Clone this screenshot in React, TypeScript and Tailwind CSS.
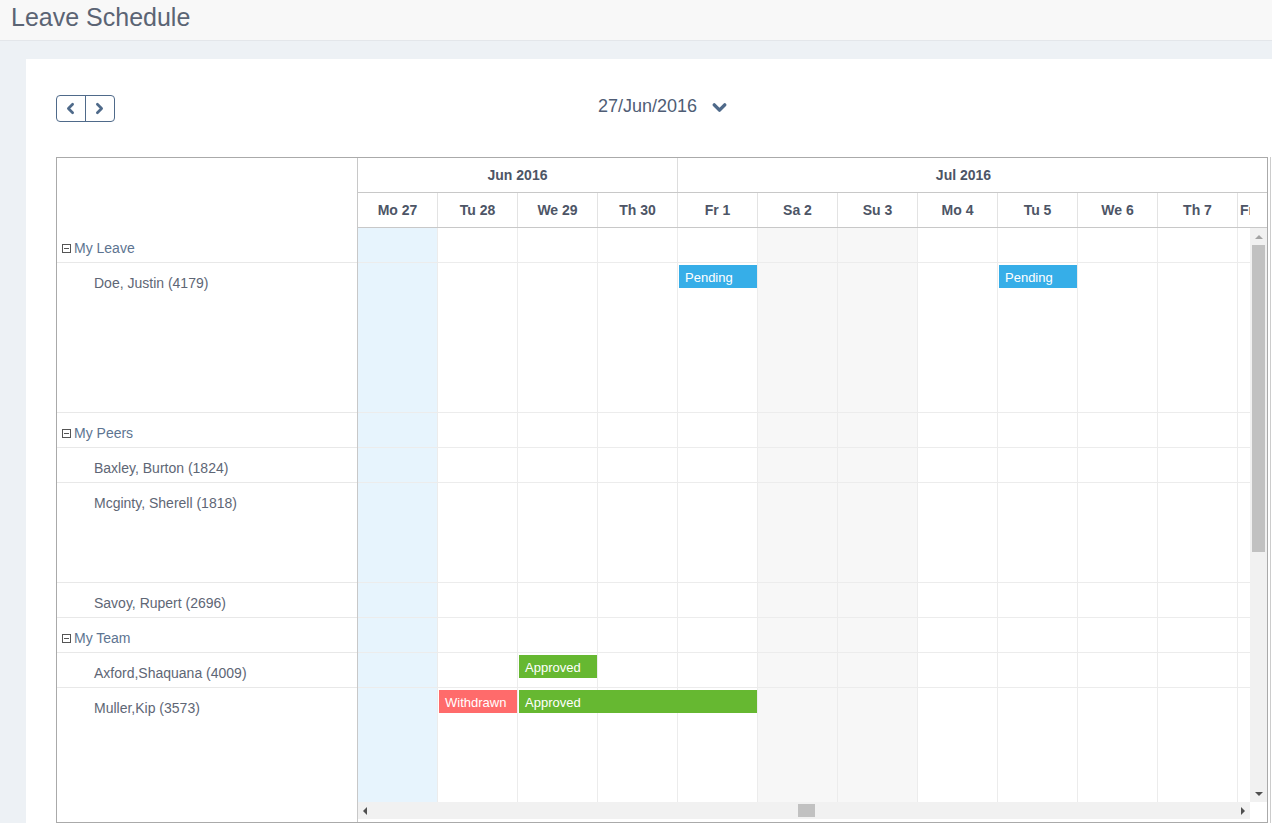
import { ChevronLeft, ChevronRight, ChevronDown } from "lucide-react";

type Ev = { col: number; span: number; text: string; color: string };
type Row = { label: string; group?: boolean; h: number; events?: Ev[] };

const days = ["Mo 27", "Tu 28", "We 29", "Th 30", "Fr 1", "Sa 2", "Su 3", "Mo 4", "Tu 5", "We 6", "Th 7", "Fr 8"];

const rows: Row[] = [
   { label: "My Leave", group: true, h: 35 },
   {
      label: "Doe, Justin (4179)", h: 150, events: [
         { col: 4, span: 1, text: "Pending", color: "bg-[#36aee8]" },
         { col: 8, span: 1, text: "Pending", color: "bg-[#36aee8]" },
      ]
   },
   { label: "My Peers", group: true, h: 35 },
   { label: "Baxley, Burton (1824)", h: 35 },
   { label: "Mcginty, Sherell (1818)", h: 100 },
   { label: "Savoy, Rupert (2696)", h: 35 },
   { label: "My Team", group: true, h: 35 },
   { label: "Axford,Shaquana (4009)", h: 35, events: [{ col: 2, span: 1, text: "Approved", color: "bg-[#66b831]" }] },
   {
      label: "Muller,Kip (3573)", h: 150, events: [
         { col: 1, span: 1, text: "Withdrawn", color: "bg-[#ff6b6b]" },
         { col: 2, span: 3, text: "Approved", color: "bg-[#66b831]" },
      ]
   },
]

function cellBg(i: number) {
   if (i === 0) return "bg-[#e7f4fd]";
   if (i === 5 || i === 6) return "bg-[#f7f7f7]";
   return "bg-white";
}

export default function App() {
   return <div className="h-[823px] w-[1272px] overflow-hidden bg-[#edf1f5]" style={{ fontFamily: '"Liberation Sans", Arial, sans-serif' }}>
      <div className="h-[41px] bg-[#f8f8f8] border-b border-[#e3e6ea] pl-[11px] pt-[3px]">
         <h1 className="text-[25px] leading-[29px] text-[#5b6474]">Leave Schedule</h1>
      </div>
      <div className="pl-[26px] pt-[18px]">
         <div className="bg-white pl-[30px] pt-[36px] h-[800px]">
            <div className="flex items-center h-[26px]">
               <div className="flex h-[27px] w-[59px] border border-[#4f6a8a] rounded-[4px] text-[#4f6a8a]">
                  <div className="w-[29px] flex items-center justify-center border-r border-[#4f6a8a]"><ChevronLeft size={17} strokeWidth={3.8} /></div>
                  <div className="w-[29px] flex items-center justify-center"><ChevronRight size={17} strokeWidth={3.8} /></div>
               </div>
               <div className="ml-[483px] -mt-[3px] flex items-center gap-[12px] text-[#4f5d75] text-[18px]">
                  <span>27/Jun/2016</span>
                  <ChevronDown size={21} strokeWidth={4} className="text-[#4f6a8a] mt-[2px]" />
               </div>
            </div>
            <div className="mt-[36px] flex">
               <div className="flex w-[1212px] h-[666px] border border-[#aaaaaa] overflow-hidden">
                  {/* left column */}
                  <div className="w-[301px] shrink-0 border-r border-[#c8c8c8] flex flex-col">
                     <div className="h-[70px] shrink-0" />
                     {rows.map((r) =>
                        <div key={r.label} style={{ height: r.h }} className="shrink-0 border-b border-[#e8e8e8] text-[14px]">
                           {r.group
                              ? <div className="flex items-center pt-[12px] pl-[5px] text-[#5d7491] leading-[16px]">
                                 <span className="w-[9px] h-[9px] border border-[#555] flex items-center justify-center mr-[3px]">
                                    <span className="w-[5px] h-px bg-[#555]" />
                                 </span>
                                 {r.label}
                              </div>
                              : <div className="pl-[37px] pt-[10px] text-[#5e6675]">{r.label}</div>}
                        </div>
                     )}
                  </div>
                  {/* timeline */}
                  <div className="flex flex-col w-[909px] shrink-0">
                     <div className="h-[35px] flex border-b border-[#c8c8c8] text-[14px] font-bold text-[#4d5566]">
                        <div className="w-[320px] shrink-0 border-r border-[#dddddd] flex items-center justify-center">Jun 2016</div>
                        <div className="flex-1 flex items-center justify-center pr-[18px]">Jul 2016</div>
                     </div>
                     <div className="h-[35px] flex border-b border-[#c8c8c8] text-[14px] font-bold text-[#4d5566]">
                        <div className="w-[892px] shrink-0 flex overflow-hidden">
                           {days.map((d, i) =>
                              <div key={d} className={"w-[80px] shrink-0 border-r border-[#e3e3e3] flex items-center " + (i === 11 ? "pl-[2px]" : "justify-center")}>{d}</div>
                           )}
                        </div>
                     </div>
                     <div className="flex h-[574px]">
                        <div className="w-[892px] shrink-0 overflow-hidden flex flex-col">
                           {rows.map((r) =>
                              <div key={r.label} style={{ height: r.h }} className="shrink-0 relative flex">
                                 {days.map((d, i) =>
                                    <div key={d} className={"w-[80px] shrink-0 border-r border-b border-[#ececec] " + cellBg(i)} />
                                 )}
                                 {r.events?.map((e) =>
                                    <div key={e.text + e.col} style={{ left: e.col * 80 + 1, width: e.span * 80 - 2 }}
                                       className={"absolute top-[2px] h-[23px] text-white text-[13px] leading-[25px] pl-[6px] " + e.color}>{e.text}</div>
                                 )}
                              </div>
                           )}
                        </div>
                        <div className="w-[17px] shrink-0 bg-[#f1f1f1] flex flex-col items-center">
                           <div className="h-[17px] flex items-center justify-center">
                              <div className="w-0 h-0 border-l-[4px] border-r-[4px] border-b-[4px] border-l-transparent border-r-transparent border-b-[#a3a3a3]" />
                           </div>
                           <div className="w-[13px] h-[307px] bg-[#c1c1c1]" />
                           <div className="flex-1" />
                           <div className="h-[17px] flex items-center justify-center">
                              <div className="w-0 h-0 border-l-[4px] border-r-[4px] border-t-[4px] border-l-transparent border-r-transparent border-t-[#505050]" />
                           </div>
                        </div>
                     </div>
                     <div className="flex h-[17px]">
                        <div className="w-[892px] shrink-0 bg-[#f1f1f1] flex items-center px-[5px]">
                           <div className="w-0 h-0 border-t-[4px] border-b-[4px] border-r-[4px] border-t-transparent border-b-transparent border-r-[#505050]" />
                           <div className="w-[17px] h-[13px] bg-[#c1c1c1] ml-[431px]" />
                           <div className="flex-1" />
                           <div className="w-0 h-0 border-t-[4px] border-b-[4px] border-l-[4px] border-t-transparent border-b-transparent border-l-[#505050]" />
                        </div>
                     </div>
                  </div>
               </div>
               <div className="w-px h-[666px] bg-[#cccccc] ml-[2px]" />
            </div>
         </div>
      </div>
   </div>
}
